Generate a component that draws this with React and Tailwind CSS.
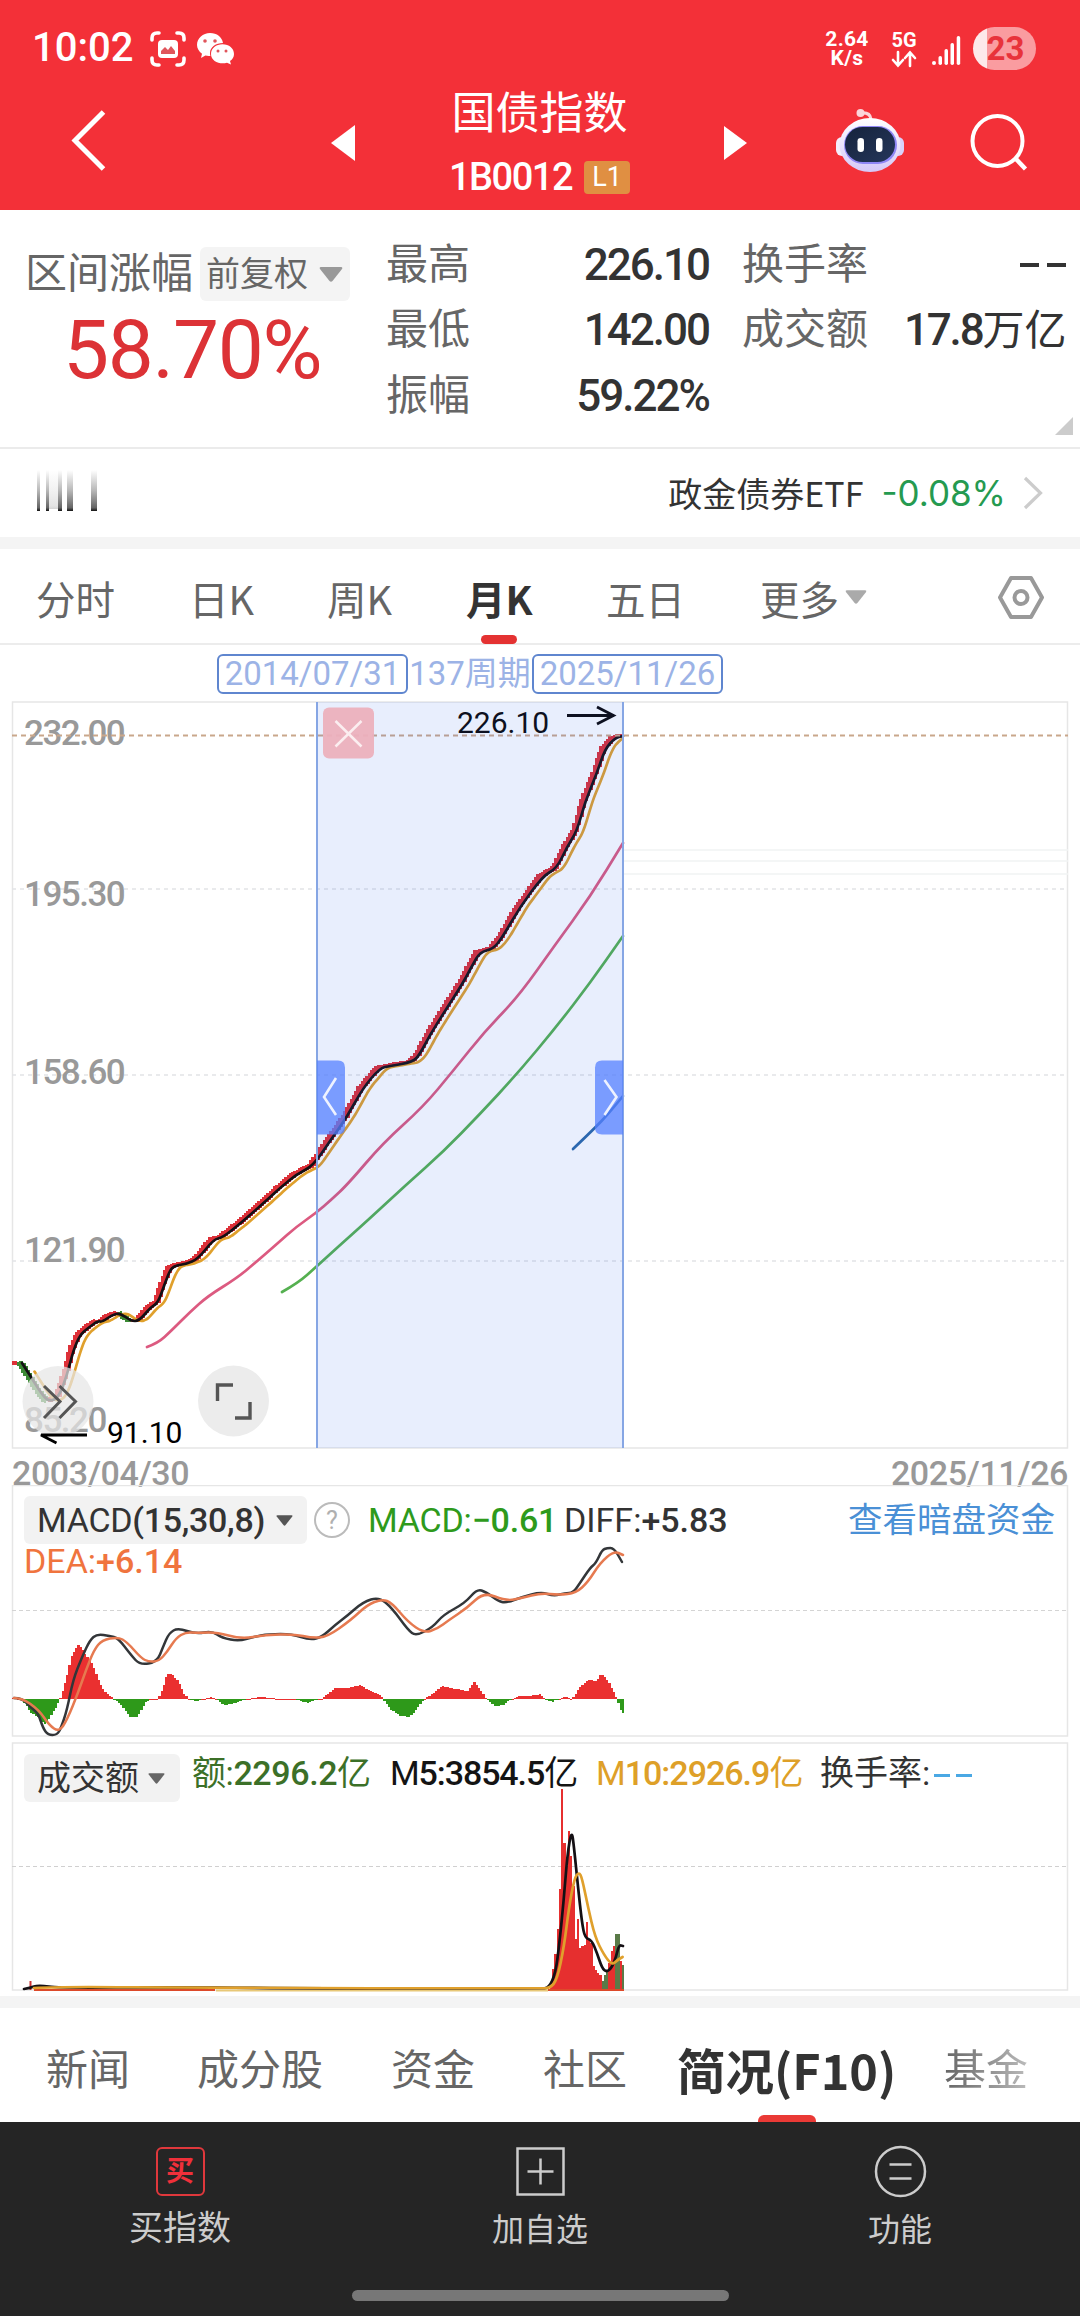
import React from 'react'

// chart coordinates are page pixels, every svg below sets its viewBox accordingly
const ma5 = [[12, 1364], [22, 1363], [31, 1377], [41, 1393], [49, 1402], [59, 1397], [67, 1375], [73.5, 1350], [80, 1335], [88, 1328], [98, 1321], [102, 1322], [112, 1315], [120, 1313], [131, 1321], [139, 1321], [151, 1307], [158, 1303], [165, 1283], [171, 1268], [178, 1265], [186, 1264], [198, 1259], [214, 1239], [222, 1238], [241, 1223], [267, 1200], [280, 1188], [297, 1174], [313, 1166], [330, 1141], [347, 1117], [363, 1088], [380, 1068], [390, 1066], [413, 1062], [420, 1054], [430, 1035], [445, 1011], [463, 983], [472, 966], [480, 952], [493, 949], [502, 938], [520, 907], [543, 876], [557, 868], [567, 847], [577, 831], [585, 802], [597, 773], [605, 749], [615, 738], [623, 736]]
const ma60 = [[147, 1347], [158, 1343], [171, 1331], [190, 1312], [208, 1296], [237, 1278], [255, 1263], [278, 1243], [296, 1227], [316, 1213], [331, 1200], [348, 1184], [383, 1143], [423, 1107], [453, 1071], [485, 1031], [518, 997], [555, 945], [590, 897], [623, 843]]
const ma120 = [[282, 1292], [298, 1283], [316, 1267], [339, 1246], [367, 1221], [407, 1184], [443, 1152], [480, 1114], [517, 1074], [557, 1026], [590, 983], [623, 936]]
const ma250 = [[573, 1149], [595, 1128], [609, 1113], [623, 1096]]

const diff = [[14, 1698], [22, 1698], [31, 1708], [38, 1713], [43, 1728], [48, 1735], [57, 1735], [61, 1728], [67, 1710], [73, 1680], [82, 1657], [90, 1640], [97, 1634], [110, 1636], [118, 1638], [131, 1655], [140, 1665], [157, 1662], [163, 1647], [169, 1633], [178, 1628], [196, 1634], [212, 1631], [222, 1638], [239, 1641], [253, 1637], [269, 1634], [292, 1634], [310, 1640], [322, 1637], [335, 1625], [347, 1616], [363, 1602], [379, 1597], [392, 1608], [408, 1630], [416, 1636], [433, 1627], [443, 1615], [465, 1603], [477, 1589], [486, 1592], [498, 1601], [506, 1603], [522, 1597], [541, 1592], [554, 1596], [565, 1593], [573, 1593], [580, 1583], [590, 1568], [596, 1563], [602, 1550], [607, 1548], [614, 1548], [622, 1562]]
const dea = [[14, 1698], [22, 1698], [39, 1710], [49, 1725], [59, 1732], [67, 1720], [78, 1693], [86, 1670], [94, 1650], [102, 1640], [118, 1637], [127, 1642], [141, 1658], [149, 1662], [159, 1661], [167, 1652], [176, 1638], [186, 1632], [198, 1633], [216, 1632], [241, 1639], [265, 1635], [294, 1634], [312, 1638], [327, 1637], [351, 1620], [367, 1605], [382, 1599], [392, 1603], [408, 1622], [424, 1633], [437, 1629], [449, 1620], [467, 1608], [484, 1592], [506, 1601], [522, 1598], [541, 1593], [559, 1595], [576, 1593], [588, 1582], [600, 1563], [614, 1551], [623, 1555]]
const hist = [[12, 1], [22, 0], [30, -13], [40, -20], [45, -26], [55, -10], [60, 0], [66, 20], [72, 45], [79, 55], [85, 45], [92, 36], [100, 15], [105, 7], [114, 0], [120, -5], [130, -18], [137, -18], [145, -4], [150, 0], [158, 0], [163, 12], [167, 25], [172, 25], [178, 18], [184, 5], [189, 0], [196, -2], [202, 0], [212, 2], [216, 0], [224, -6], [235, -4], [245, 0], [262, 2], [280, 0], [295, 0], [308, -4], [318, 0], [321, 0], [335, 11], [347, 11], [360, 14], [370, 8], [381, 4], [383, 0], [390, -10], [400, -17], [410, -18], [418, -8], [424, 0], [435, 7], [442, 13], [450, 11], [468, 8], [474, 17], [480, 10], [486, 0], [495, -7], [503, -6], [511, 0], [520, 3], [530, 3], [540, 5], [545, 0], [552, -3], [558, 0], [565, 2], [572, 0], [580, 12], [588, 19], [597, 18], [601, 26], [608, 18], [615, 5], [617, 0], [620, -10], [624, -16]]

const volumes = [2, 8, 22, 37, 62, 102, 202, 148, 125, 160, 135, 105, 52, 72, 43, 45, 46, 69, 51, 48, 25, 21, 18, 16, 10, 16, 20, 28, 40, 45, 57, 57, 30, 26]
const greenVolumes = [24, 25, 26, 30, 31, 33]
const volM5 = [[24, 1989], [30, 1988], [38, 1985], [60, 1988], [170, 1987], [300, 1988.5], [540, 1988.5], [549, 1988], [555.5, 1973], [559, 1947], [563.5, 1903], [567.5, 1853], [571.7, 1830], [574, 1847], [578, 1887], [582, 1923], [585, 1938], [591.6, 1940], [597, 1953], [602, 1968], [606.5, 1972], [611.6, 1968], [616, 1957], [619, 1945], [623, 1946]]
const volM10 = [[34, 1988], [60, 1986.5], [200, 1988], [540, 1988.5], [550, 1988], [557, 1980], [564, 1947], [569, 1907], [574.5, 1878], [579, 1872], [582, 1878], [588, 1907], [595, 1937], [604, 1955], [612, 1965], [617.5, 1960], [622.6, 1957]]

const STEP = 2.25

const valueAt = (pts, x) => {
    if (x <= pts[0][0]) return pts[0][1]
    for (let i = 1; i < pts.length; i++) {
        if (x <= pts[i][0]) {
            const [x0, y0] = pts[i - 1]
            const [x1, y1] = pts[i]
            return y0 + ((y1 - y0) * (x - x0)) / (x1 - x0)
        }
    }
    return pts[pts.length - 1][1]
}

// rounded polyline through the middle of each segment
const curve = (pts) => {
    let d = `M${pts[0][0]} ${pts[0][1]}`
    for (let i = 1; i < pts.length - 1; i++) {
        const mx = (pts[i][0] + pts[i + 1][0]) / 2
        const my = (pts[i][1] + pts[i + 1][1]) / 2
        d += `Q${pts[i][0]} ${pts[i][1]} ${mx} ${my}`
    }
    const last = pts[pts.length - 1]
    return d + `L${last[0]} ${last[1]}`
}

const xs = Array.from({ length: 272 }, (_, i) => 12 + i * STEP)
const ma10 = xs.filter((x) => x > 34 && x < 624).map((x) => [x, (valueAt(ma5, x - 4) + valueAt(ma5, x - 7) + valueAt(ma5, x - 10)) / 3])

const Line = ({ pts, color, width = 2.7 }) => (
    <path d={curve(pts)} fill="none" stroke={color} strokeWidth={width} strokeLinecap="round" strokeLinejoin="round" />
)

const Down = ({ className }) => (
    <svg viewBox="0 0 24 15" className={className} fill="currentColor"><path d="M2 0h20q2 0 1 2L13.500 14q-1.500 1.500-3 0L1 2Q0 0 2 0z" /></svg>
)

const StatusBar = () => (
    <div className="flex h-24 items-center pl-8 pr-11 pt-[2px]">
        <span className="mt-[-2px] w-[118px] text-[40px] font-medium leading-none">10:02</span>
        <svg className="h-9 w-9" viewBox="0 0 36 36" fill="none" stroke="#fff" strokeWidth="3.600" strokeLinecap="round">
            <path d="M2 9V7q0-5 5-5h2M27 2h2q5 0 5 5v2M34 27v2q0 5-5 5h-2M9 34H7q-5 0-5-5v-2" />
            <rect x="8" y="9" width="20" height="18" rx="4" fill="#fff" stroke="none" />
            <path d="M11 23v-3l4-4 3 3 3-4 4 5v3z" fill="#e0555b" stroke="none" />
        </svg>
        <svg className="ml-[11px] h-8 w-[38px]" viewBox="0 0 38 32" fill="#fff">
            <path d="M13 0c7 0 12 4 13 10-7 0-13 4-13 10 0 1 0 2 .4 3-2 .2-3.500 0-5-.4L4 25l1-4.300C2 18.500 0 15.500 0 12 0 5 6 0 13 0z" />
            <path d="M25.500 11.300C32 11.300 37 15.500 37 21c0 3-1.500 5.400-4 7l1 3.600-4-1.900c-7 2-16-1.200-16-8.700 0-5.500 5-9.700 11.500-9.700z" />
            <g fill="#e0555b"><circle cx="8" cy="8" r="1.800" /><circle cx="18" cy="8" r="1.800" /><circle cx="21" cy="18" r="1.500" /><circle cx="29" cy="18" r="1.500" /></g>
        </svg>
        <div className="ml-auto flex items-center">
            <div className="flex w-[44px] flex-col items-center text-[21px] font-bold leading-[19px] tracking-[0.300px]">
                <span>2.64</span>
                <span>K/s</span>
            </div>
            <div className="ml-[20px] flex w-[30px] flex-col items-center">
                <span className="text-[20px] font-bold leading-[19px]">5G</span>
                <svg className="h-[18px] w-7" viewBox="0 0 28 18" fill="none" stroke="#fff" strokeWidth="2.600" strokeLinecap="round"><path d="M8 2v13M3 10l5 5.500L13 10M20 16V3M15 8l5-5.500L25 8" /></svg>
            </div>
            <svg className="ml-[13px] mt-1 h-[30px] w-[29px]" viewBox="0 0 29 30" fill="#fff">
                <rect x="0" y="25" width="4" height="4" rx="2" /><rect x="6.500" y="20" width="3.500" height="9" rx="1.700" /><rect x="12.500" y="13" width="3.500" height="16" rx="1.700" /><rect x="18.500" y="7" width="3.500" height="22" rx="1.700" /><rect x="24.700" y="0" width="3.500" height="29" rx="1.700" />
            </svg>
            <div className="ml-3 mt-[-2px] flex h-[43px] w-[63px] items-center justify-center overflow-hidden rounded-full bg-[linear-gradient(90deg,#fde9ea_14px,#fa9ca0_14px)] pl-[2px] text-[33px] font-bold leading-none text-[#e8333b]">23</div>
        </div>
    </div>
)

const Header = () => (
    <div className="h-[210px] bg-[#f33038] text-white">
        <StatusBar />
        <div className="flex h-[114px] items-start">
            <svg className="ml-[70px] mt-[13px] h-[62px] w-[36px]" viewBox="0 0 36 62" fill="none" stroke="#fff" strokeWidth="5"><path d="M33.500 3L5 31.500 33.500 60" /></svg>
            <svg className="ml-[225px] mt-[29px] h-9 w-6" viewBox="0 0 24 36" fill="#fff"><path d="M24 0v36L0 18z" /></svg>
            <div className="flex w-[369px] flex-col items-center">
                <div className="text-[44px] leading-[36px]">国债指数</div>
                <div className="mt-[23px] flex h-[44px] items-center gap-3">
                    <span className="text-[38px] font-medium leading-none tracking-[-1.500px]">1B0012</span>
                    <span className="flex h-[33px] w-[46px] items-center justify-center rounded-[4px] bg-[#e08f42] text-[27px] leading-none">L1</span>
                </div>
            </div>
            <svg className="mt-[30px] h-[34px] w-[23px]" viewBox="0 0 23 34" fill="#fff"><path d="M0 0v34l23-17z" /></svg>
            <svg className="ml-[89px] mt-[12px] h-[64px] w-[68px]" viewBox="0 0 68 64">
                <defs>
                    <linearGradient id="face" x1="0" y1="0" x2="0" y2="1"><stop offset="0" stopColor="#fff" /><stop offset="1" stopColor="#d5c8f8" /></linearGradient>
                    <linearGradient id="visor" x1="0" y1="0" x2="1" y2="1"><stop offset="0" stopColor="#15233c" /><stop offset="1" stopColor="#25365a" /></linearGradient>
                </defs>
                <path d="M35 11Q34 4 25 5" fill="none" stroke="#fbd5da" strokeWidth="3" />
                <circle cx="24.500" cy="5" r="4" fill="#fbd5da" />
                <rect x="0" y="29" width="12" height="19" rx="6" fill="#f4eefc" />
                <rect x="56" y="29" width="12" height="19" rx="6" fill="#d9d2fb" />
                <ellipse cx="34" cy="37" rx="30.500" ry="27" fill="url(#face)" />
                <rect x="8" y="18" width="53" height="38" rx="19" fill="#8f86f5" />
                <rect x="9" y="19" width="50" height="35" rx="17.500" fill="url(#visor)" />
                <rect x="21.500" y="30" width="6.500" height="14" rx="3.200" fill="#fff" />
                <rect x="40" y="30" width="6.500" height="14" rx="3.200" fill="#fff" />
            </svg>
            <svg className="ml-[66px] mt-[17px] h-[58px] w-[58px]" viewBox="0 0 58 58" fill="none" stroke="#fff" strokeWidth="4"><circle cx="27.500" cy="28" r="25" /><path d="M46 46l9.500 10" strokeWidth="4.500" /></svg>
        </div>
    </div>
)

const Quote = () => (
    <div className="flex h-[239px] border-b-2 border-[#ebebeb] text-[#666]">
        <div className="w-[386px] pl-[25px]">
            <div className="mt-[36px] flex h-[56px] items-center">
                <span className="text-[42px] leading-none">区间涨幅</span>
                <div className="ml-[7px] flex h-[54px] w-[150px] items-center justify-between rounded-[6px] bg-[#f4f4f4] pl-[6px] pr-[7px] text-[34px] leading-none">
                    前复权<Down className="h-[15px] w-6 text-[#999]" />
                </div>
            </div>
            <div className="pl-[38px] pt-[8px] text-[82px] leading-[80px] tracking-[-1.300px] text-[#dc3236]">58.70%</div>
        </div>
        <div className="mt-[22px] grid h-[197px] w-[323px] grid-cols-2 grid-rows-3 items-center text-[42px] leading-none">
            <span>最高</span><Num>226.10</Num>
            <span>最低</span><Num>142.00</Num>
            <span>振幅</span><Num>59.22%</Num>
        </div>
        <div className="mt-[22px] ml-[33px] grid h-[197px] w-[324px] grid-cols-2 grid-rows-3 items-center text-[42px] leading-none">
            <span>换手率</span>
            <span className="flex justify-end gap-2"><i className="h-1 w-[19px] bg-[#333]" /><i className="h-1 w-[19px] bg-[#333]" /></span>
            <span>成交额</span>
            <span className="whitespace-nowrap text-right text-[42px] text-[#333]"><b className="text-[44px] font-medium tracking-[-2.200px]">17.8</b>万亿</span>
        </div>
        <svg className="ml-[-11px] mt-[207px] h-[18px] w-[18px]" viewBox="0 0 18 18" fill="#ccc"><path d="M18 0v18H0z" /></svg>
    </div>
)

const Num = ({ children }) => (
    <span className="text-right text-[44px] font-medium tracking-[-2px] text-[#333]">{children}</span>
)

const EtfRow = () => (
    <div className="flex h-[88px] items-center">
        <svg className="ml-[36px] mt-[-4px] h-[42px] w-[160px]" viewBox="0 0 160 42">
            <defs>
                <linearGradient id="fade" x1="0" y1="0" x2="0" y2="1"><stop offset="0" stopColor="#333" stopOpacity="0" /><stop offset="0.500" stopColor="#333" stopOpacity="0.350" /><stop offset="0.920" stopColor="#222" stopOpacity="0.700" /><stop offset="1" stopColor="#111" /></linearGradient>
            </defs>
            <g fill="url(#fade)">
                <rect x="1" y="0" width="3" height="41" /><rect x="10" y="0" width="3" height="41" />
                <rect x="22" y="0" width="4" height="41" /><rect x="31" y="0" width="6" height="41" /><rect x="55" y="0" width="6" height="41" />
                <rect x="13" y="0" width="9" height="39" opacity="0.180" />
            </g>
        </svg>
        <div className="ml-auto flex items-center pr-[37px]">
            <span className="font-['Noto_Sans_CJK_SC'] text-[34px] leading-none text-[#333]">政金债券ETF</span>
            <span className="ml-[18px] font-[Inter] text-[35px] leading-none text-[#259a50]">-0.08%</span>
            <svg className="ml-[17px] h-[34px] w-[20px]" viewBox="0 0 20 34" fill="none" stroke="#ccc" strokeWidth="3.200"><path d="M2 2l15.500 15L2 32" /></svg>
        </div>
    </div>
)

const periods = [
    { name: '分时', width: 'w-[153px]' },
    { name: '日K', width: 'w-[138px]' },
    { name: '周K', width: 'w-[139px]' },
    { name: '月K', width: 'w-[140px]', active: true },
    { name: '五日', width: 'w-[154px]' },
]

const PeriodTabs = () => (
    <div className="flex h-[96px] items-start border-b-2 border-[#ececec] pl-[36px] font-['Noto_Sans_CJK_SC'] text-[39.500px] text-[#666]">
        {periods.map((p) => (
            <div key={p.name} className={p.width}>
                <div className="flex w-fit flex-col items-center">
                    <span className={p.active ? 'h-[86px] font-bold leading-[98px] text-[#333]' : 'leading-[98px]'}>{p.name}</span>
                    {p.active && <i className="h-[9px] w-9 rounded-full bg-[#e43232]" />}
                </div>
            </div>
        ))}
        <span className="leading-[98px]">更多</span>
        <Down className="ml-[6px] mt-[39px] h-[18px] w-[22px] text-[#aaa]" />
        <svg className="ml-[131px] mt-[27px] h-[43px] w-[46px]" viewBox="0 0 46 43" fill="none" stroke="#999" strokeWidth="4" strokeLinejoin="round"><path d="M13 2h20l11 19.500L33 41H13L2 21.500z" /><circle cx="23" cy="21.500" r="6.500" /></svg>
    </div>
)

const RangeRow = () => (
    <div className="flex h-[56px] items-center pl-[217px] pt-[1px] text-[33px] leading-none text-[#9cb3e6]">
        <span className="flex h-10 w-[191px] items-center justify-center rounded-[6px] border-2 border-[#5f86cf]">2014/07/31</span>
        <span className="w-[124px] whitespace-nowrap text-center">137周期</span>
        <span className="flex h-10 w-[191px] items-center justify-center rounded-[6px] border-2 border-[#5f86cf]">2025/11/26</span>
    </div>
)

const axis = [['232.00', 745], ['195.30', 906], ['158.60', 1084], ['121.90', 1262], ['85.20', 1432]]

const PriceChart = () => (
    <svg className="block h-[750px] w-[1080px]" viewBox="0 701 1080 750">
        <rect x="12.500" y="702" width="1055" height="746" fill="none" stroke="#e6e6e6" strokeWidth="1.500" />
        {[889, 1075, 1261].map((y) => <path key={y} d={`M12 ${y}H1068`} stroke="#e2e4e6" strokeWidth="1.500" strokeDasharray="4 4" />)}
        <path d="M624 850H1068M624 861H1068M624 874H1068" stroke="#f1f4f4" strokeWidth="1.500" />
        <g fill="#999" fontSize="35" fontWeight="500" letterSpacing="-1.500">
            {axis.map(([t, y]) => <text key={t} x="24" y={y}>{t}</text>)}
        </g>
        <g shapeRendering="crispEdges">
            {xs.filter((x) => x < 622).map((x) => {
                const y0 = valueAt(ma5, x)
                const y1 = valueAt(ma5, x + 6.5)
                const up = y1 <= y0 + 0.5
                return <rect key={x} x={x} y={Math.min(y0, y1) - 2} width={STEP + 0.2} height={Math.abs(y0 - y1) + 3} fill={up ? '#dd3038' : '#3b8a34'} />
            })}
        </g>
        <Line pts={ma10} color="#e0a02c" />
        <Line pts={ma5.slice(1)} color="#141014" />
        <Line pts={ma60} color="#dc5a80" />
        <Line pts={ma120} color="#55b050" />
        <Line pts={ma250} color="#2b68a8" />
        <path d="M12 735.500H1068" stroke="#c9a78b" strokeWidth="1.800" strokeDasharray="5 4" />
        <rect x="317" y="702" width="306" height="746" fill="#3264f0" fillOpacity="0.110" />
        <path d="M317 702V1448M623 702V1448" stroke="#86a6e4" strokeWidth="2" />
        <rect x="323" y="707.500" width="51" height="51" rx="6" fill="#ecb0bd" fillOpacity="0.950" />
        <path d="M335.500 721l26 25.500M361.500 721l-26 25.500" stroke="#fbeef0" strokeWidth="2.500" />
        <text x="457" y="733" fontSize="30" fill="#0d1020">226.10</text>
        <path d="M567 715.500H613M597 707l16.500 8.500-16.500 8.500" fill="none" stroke="#0d1020" strokeWidth="2.800" />
        <path d="M317 1060.500h21q7 0 7 7v60q0 7-7 7h-21z" fill="#5580ff" fillOpacity="0.750" />
        <path d="M623 1060.500h-21q-7 0-7 7v60q0 7 7 7h21z" fill="#5580ff" fillOpacity="0.750" />
        <path d="M336 1078l-12 19 12 18M604.500 1080l12 17-12 18" fill="none" stroke="#eef2ff" strokeWidth="2.600" />
        <circle cx="58" cy="1401.500" r="35.500" fill="#e6e6e6" fillOpacity="0.720" />
        <path d="M44 1386l16 15.500-16 16.500M59.500 1386l16 15.500-16 16.500" fill="none" stroke="#555" strokeWidth="3" />
        <circle cx="233.500" cy="1401" r="35.500" fill="#ececec" />
        <path d="M217.500 1401v-16H233M235 1418h15v-16" fill="none" stroke="#555" strokeWidth="3.400" />
        <path d="M87 1435H41l15.500 8" fill="none" stroke="#000" strokeWidth="2.800" />
        <text x="107" y="1443" fontSize="30" fill="#000">91.10</text>
    </svg>
)

const DateRow = () => (
    <div className="flex h-[34px] items-center justify-between pl-3 pr-3 pt-[10px] text-[34px] font-medium leading-none tracking-[-0.400px] text-[#999]">
        <span>2003/04/30</span><span>2025/11/26</span>
    </div>
)

const Macd = () => (
    <div className="relative h-[254px]">
        <svg className="absolute left-0 top-0 h-[254px] w-[1080px]" viewBox="0 1485 1080 254">
            <rect x="12.500" y="1485.500" width="1055" height="250.500" fill="none" stroke="#e6e6e6" strokeWidth="1.500" />
            <path d="M12 1610.500H1068" stroke="#d4d4d4" strokeDasharray="4 3" />
            <g shapeRendering="crispEdges">
                {xs.map((x) => {
                    const v = valueAt(hist, x + 1)
                    return <rect key={x} x={x} y={v > 0 ? 1699 - v : 1699} width={STEP + 0.2} height={Math.max(Math.abs(v), 1)} fill={v >= 0 ? '#ea3030' : '#2e991a'} />
                })}
            </g>
            <Line pts={diff} color="#333639" width={2.5} />
            <Line pts={dea} color="#e67a50" width={2.5} />
        </svg>
        <div className="relative flex items-center pl-6 pt-[11px] text-[34px] leading-none text-[#333]">
            <div className="flex h-12 w-[283px] items-center rounded-[6px] bg-[#f2f2f2] pl-[13px]">
                <span className="w-[239px] whitespace-nowrap tracking-[-0.300px]">MACD<b className="font-medium">(15,30,8)</b></span>
                <Down className="h-[11px] w-[17px] text-[#555]" />
            </div>
            <span className="ml-[7px] flex h-9 w-9 items-center justify-center rounded-full border-[2.500px] border-[#bbb] text-[25px] leading-none text-[#b0b0b0]">?</span>
            <span className="ml-[18px] w-[196px] whitespace-nowrap tracking-[-0.200px] text-[#2e9a1c]">MACD:<b className="font-medium">−0.61</b></span>
            <span className="whitespace-nowrap">DIFF:<b className="font-medium">+5.83</b></span>
            <span className="ml-auto pr-[25px] text-[34.500px] text-[#4a90d6]">查看暗盘资金</span>
        </div>
        <div className="relative pl-6 text-[34px] leading-[35px] text-[#f0743e]">DEA:<b className="font-medium">+6.14</b></div>
    </div>
)

const Volume = () => (
    <div className="relative mt-[3px] h-[254px]">
        <svg className="absolute left-0 top-0 h-[254px] w-[1080px]" viewBox="0 1742 1080 254">
            <rect x="12.500" y="1743" width="1055" height="247" fill="none" stroke="#e6e6e6" strokeWidth="1.500" />
            <path d="M12 1866.500H1068" stroke="#d0d0d0" strokeDasharray="4 3" />
            <g shapeRendering="crispEdges">
                {volumes.map((h, i) => (
                    <rect key={i} x={547.5 + i * STEP} y={1991 - h} width={STEP + 0.2} height={h} fill={greenVolumes.includes(i) ? '#5a7a48' : '#e62f2f'} />
                ))}
            </g>
            <path d="M30.500 1990v-9" stroke="#c33" strokeWidth="2" />
            <path d="M34 1990H215M350 1990h40M548 1990h76" stroke="#dd4a2a" strokeWidth="2" />
            <path d="M216 1990.500H548" stroke="#e8c878" strokeWidth="2" />
            <Line pts={volM5} color="#141014" />
            <Line pts={volM10} color="#e0a02c" />
        </svg>
        <div className="relative flex items-center pl-6 pt-3 text-[34px] leading-none text-[#333]">
            <div className="flex h-12 w-[156px] items-center rounded-[6px] bg-[#f2f2f2] pl-[13px]">
                <span className="w-[111px] whitespace-nowrap">成交额</span>
                <Down className="h-[11px] w-[17px] text-[#666]" />
            </div>
            <span className="ml-3 mt-[-11px] w-[198px] whitespace-nowrap tracking-[-0.400px] text-[#3c7028]">额:<b className="font-medium">2296.2</b>亿</span>
            <span className="mt-[-11px] w-[206px] whitespace-nowrap tracking-[-1.100px] text-[#141414]">M<b className="font-medium">5:3854.5</b>亿</span>
            <span className="mt-[-11px] w-[224px] whitespace-nowrap tracking-[-1px] text-[#dea028]">M<b className="font-medium">10:2926.9</b>亿</span>
            <span className="mt-[-11px]">换手率:</span>
            <span className="mt-[-6px] ml-[4px] flex gap-[6px]"><i className="h-[3px] w-4 bg-[#4aa8e4]" /><i className="h-[3px] w-4 bg-[#4aa8e4]" /></span>
        </div>
    </div>
)

const InfoTabs = () => (
    <div className="flex h-[114px] items-start overflow-hidden pl-[46px] text-[42px] leading-[126px] text-[#666]">
        <span className="w-[151px]">新闻</span>
        <span className="w-[194px]">成分股</span>
        <span className="w-[152px]">资金</span>
        <span className="w-[134px]">社区</span>
        <div className="flex w-[267px] flex-col">
            <div className="flex w-fit flex-col items-center text-[#333]">
                <span className="h-[107px] whitespace-nowrap font-['Noto_Sans_CJK_SC'] text-[48.500px] font-bold leading-[122px]">简况(F10)</span>
                <i className="h-[14px] w-[58px] rounded-[6px] bg-[#ea3a36]" />
            </div>
        </div>
        <span className="bg-gradient-to-r from-[#666] to-[#bbb] bg-clip-text text-transparent">基金</span>
    </div>
)

const BottomBar = () => (
    <div className="h-[194px] bg-[#252525] text-[#ccc]">
        <div className="grid h-[168px] grid-cols-3 text-[34px] leading-none">
            <div className="flex flex-col items-center pt-[25px]">
                <span className="flex h-[49px] w-[49px] items-center justify-center rounded-[6px] border-[2.500px] border-[#e0383c] text-[28px] font-bold text-[#f0303a]">买</span>
                <span className="mt-[15px]">买指数</span>
            </div>
            <div className="flex flex-col items-center pt-[25px]">
                <svg className="h-[49px] w-[49px]" viewBox="0 0 49 49" fill="none" stroke="#ccc" strokeWidth="2.500"><path d="M1.500 1.500h46v46h-46zM11.500 24.500h26M24.500 11.500v26" /></svg>
                <span className="mt-[18px] text-[32px]">加自选</span>
            </div>
            <div className="flex flex-col items-center pt-[23px]">
                <svg className="h-[53px] w-[53px]" viewBox="0 0 53 53" fill="none" stroke="#ccc" strokeWidth="2.500"><circle cx="26.500" cy="26.500" r="24.500" /><path d="M15.500 19.500h22M15.500 33.500h22" /></svg>
                <span className="mt-4 text-[32px]">功能</span>
            </div>
        </div>
        <div className="mx-auto h-[11px] w-[377px] rounded-full bg-[#777]" />
    </div>
)

const App = () => {
    return (
        <div className="w-[1080px] overflow-hidden bg-white font-[Roboto,'Noto_Sans_CJK_SC',sans-serif]">
            <Header />
            <Quote />
            <EtfRow />
            <div className="h-3 bg-[#f4f4f4]" />
            <PeriodTabs />
            <RangeRow />
            <PriceChart />
            <DateRow />
            <Macd />
            <Volume />
            <div className="h-3 bg-[#f4f4f4]" />
            <InfoTabs />
            <BottomBar />
        </div>
    )
}

export default App
